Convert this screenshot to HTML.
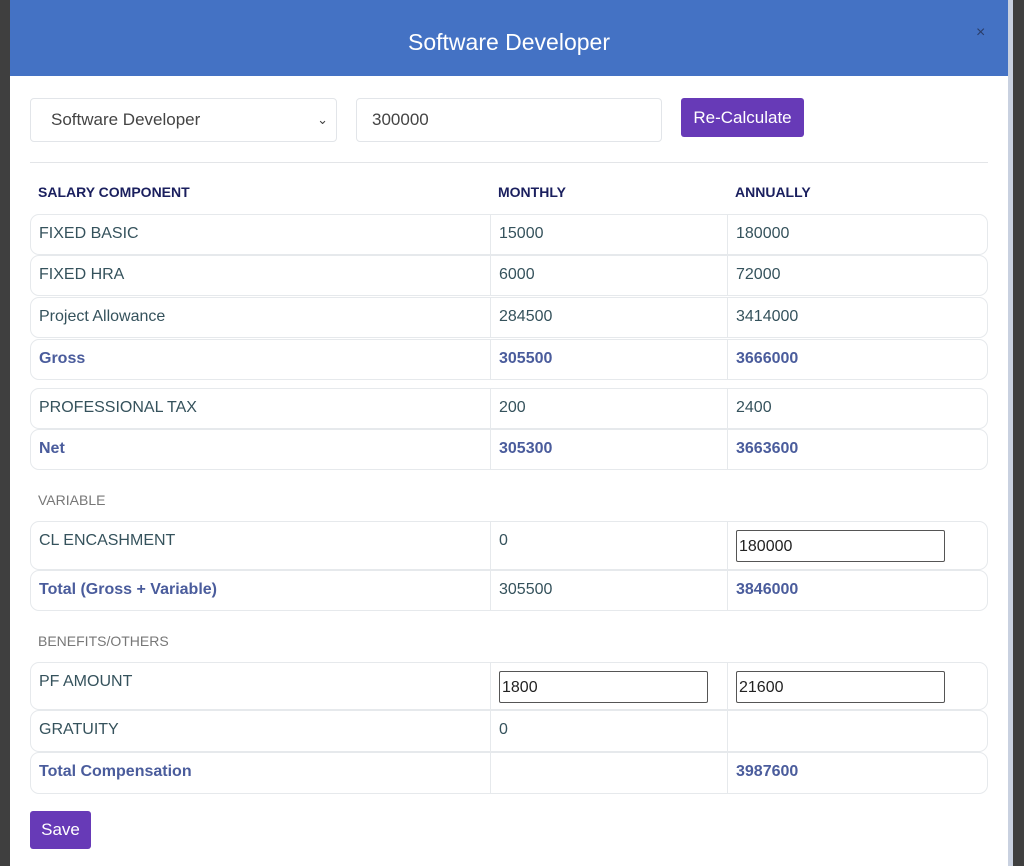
<!DOCTYPE html>
<html><head><meta charset="utf-8"><style>
*{box-sizing:border-box;margin:0;padding:0}
body{width:1024px;height:866px;overflow:hidden;background:#3f3f3f;font-family:"Liberation Sans",sans-serif;position:relative}
.modal{position:absolute;left:10px;top:0;width:1003px;height:866px;background:#fff;border-right:5px solid #c9d1e0}
.hdr{position:absolute;left:0;top:0;width:998px;height:76px;background:#4472c4;color:#fff;font-size:23px;text-align:center;line-height:84px}
.x{position:absolute;left:966px;top:24px;color:#2a3d6a;font-size:16px}
.a{position:absolute}
.inp{position:absolute;border:1px solid #e2e5e9;border-radius:4px;font-size:17px;color:#444;padding-left:20px;line-height:42px;height:44px}
.btn{position:absolute;background:#673ab7;color:#fff;border-radius:3px;font-size:17px;text-align:center}
.th{position:absolute;top:184px;font-size:14px;font-weight:bold;color:#1a1f5e}
.row{position:absolute;left:20px;width:958px;border:1px solid #e6e9ec;border-radius:9px;font-size:16px;color:#35525c}
.row div{position:absolute;top:0;height:100%;padding:10px 0 0 8px}
.c1{left:0;width:459px}
.c2{left:459px;width:237px;border-left:1px solid #e6e9ec}
.c3{left:696px;width:260px;border-left:1px solid #e6e9ec}
.b{font-weight:bold;color:#4a5c9c}
.lbl{position:absolute;left:28px;font-size:14px;color:#777}
.box{display:block;width:209px;height:32px;border:1px solid #555;border-radius:2px;font-size:16px;color:#222;padding:7px 0 0 2px;margin-top:-2px}
</style></head><body>
<div class="modal">
<div class="hdr">Software Developer</div>
<div class="x">×</div>
<div class="inp" style="left:20px;top:98px;width:307px">Software Developer<span style="position:absolute;right:8px;font-size:13px">&#8964;</span></div>
<div class="inp" style="left:346px;top:98px;width:306px;padding-left:15px">300000</div>
<div class="btn" style="left:671px;top:98px;width:123px;height:39px;line-height:39px">Re-Calculate</div>
<div class="a" style="left:20px;top:162px;width:958px;height:1px;background:#e3e5e8"></div>
<div class="th" style="left:28px">SALARY COMPONENT</div>
<div class="th" style="left:488px">MONTHLY</div>
<div class="th" style="left:725px">ANNUALLY</div>

<div class="row" style="top:214px;height:41px"><div class="c1">FIXED BASIC</div><div class="c2">15000</div><div class="c3">180000</div></div>
<div class="row" style="top:255px;height:41px"><div class="c1">FIXED HRA</div><div class="c2">6000</div><div class="c3">72000</div></div>
<div class="row" style="top:297px;height:41px"><div class="c1">Project Allowance</div><div class="c2">284500</div><div class="c3">3414000</div></div>
<div class="row b" style="top:339px;height:41px"><div class="c1">Gross</div><div class="c2">305500</div><div class="c3">3666000</div></div>
<div class="row" style="top:388px;height:41px"><div class="c1">PROFESSIONAL TAX</div><div class="c2">200</div><div class="c3">2400</div></div>
<div class="row b" style="top:429px;height:41px"><div class="c1">Net</div><div class="c2">305300</div><div class="c3">3663600</div></div>
<div class="lbl" style="top:492px">VARIABLE</div>
<div class="row" style="top:521px;height:49px"><div class="c1">CL ENCASHMENT</div><div class="c2">0</div><div class="c3"><span class="box">180000</span></div></div>
<div class="row" style="top:570px;height:41px"><div class="c1 b">Total (Gross + Variable)</div><div class="c2">305500</div><div class="c3 b">3846000</div></div>
<div class="lbl" style="top:633px">BENEFITS/OTHERS</div>
<div class="row" style="top:662px;height:48px"><div class="c1">PF AMOUNT</div><div class="c2"><span class="box">1800</span></div><div class="c3"><span class="box">21600</span></div></div>
<div class="row" style="top:710px;height:42px"><div class="c1">GRATUITY</div><div class="c2">0</div><div class="c3"></div></div>
<div class="row b" style="top:752px;height:42px"><div class="c1">Total Compensation</div><div class="c2"></div><div class="c3">3987600</div></div>
<div class="btn" style="left:20px;top:811px;width:61px;height:38px;line-height:38px">Save</div>
</div>
</body></html>
